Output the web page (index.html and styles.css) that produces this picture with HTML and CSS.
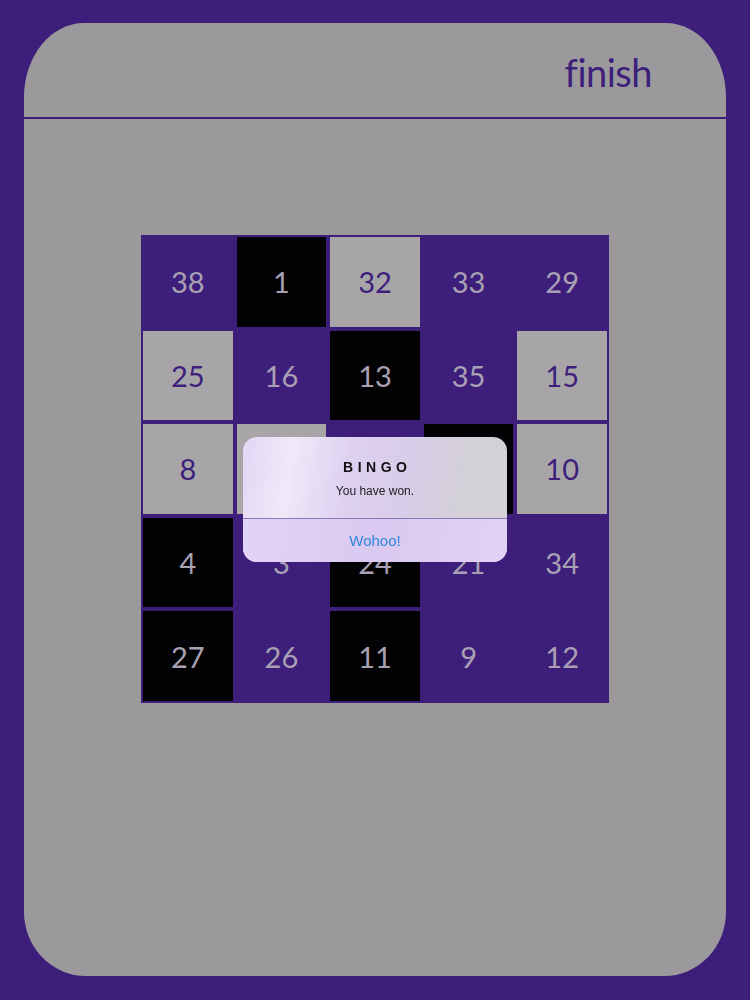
FILE: index.html
```html
<!DOCTYPE html>
<html>
<head>
<meta charset="utf-8">
<link rel="stylesheet" href="styles.css">
</head>
<body>
<div class="card">
  <header class="header"><span class="finish">finish</span></header>
  <main class="board-wrap">
    <div class="board">
      <div class="cell p">38</div><div class="cell b">1</div><div class="cell g">32</div><div class="cell p">33</div><div class="cell p">29</div>
      <div class="cell g">25</div><div class="cell p">16</div><div class="cell b">13</div><div class="cell p">35</div><div class="cell g">15</div>
      <div class="cell g">8</div><div class="cell g"></div><div class="cell p"></div><div class="cell b"></div><div class="cell g">10</div>
      <div class="cell b">4</div><div class="cell p">3</div><div class="cell b">24</div><div class="cell p">21</div><div class="cell p">34</div>
      <div class="cell b">27</div><div class="cell p">26</div><div class="cell b">11</div><div class="cell p">9</div><div class="cell p">12</div>
    </div>
  </main>
</div>
<div class="alert">
  <div class="alert-body">
    <div class="alert-title">BINGO</div>
    <div class="alert-msg">You have won.</div>
  </div>
  <div class="alert-btn">Wohoo!</div>
</div>
</body>
</html>
```
FILE: styles.css
```css
html, body {
  margin: 0;
  padding: 0;
}
body {
  background: #3d1f7b;
  width: 750px;
  height: 1000px;
  padding: 23px 24px 24px;
  box-sizing: border-box;
  font-family: "Lato", "Open Sans", sans-serif;
}
.card {
  background: #9b999c;
  height: 953px;
  border-radius: 60px 60px 62px 62px / 74px 74px 64px 64px;
  overflow: hidden;
  display: flex;
  flex-direction: column;
}
.header {
  height: 96px;
  border-bottom: 2px solid #3d1f7b;
  display: flex;
  justify-content: flex-end;
  align-items: flex-end;
  padding-right: 74px;
  padding-bottom: 26px;
  box-sizing: border-box;
  flex: none;
}
.finish {
  color: #3d1f7b;
  font-size: 38px;
  line-height: 1;
  letter-spacing: -0.5px;
}
.board-wrap {
  display: flex;
  justify-content: center;
  padding-top: 116px;
}
.board {
  width: 468px;
  height: 468px;
  box-sizing: border-box;
  background: #3d1f7b;
  padding: 2px;
  display: grid;
  grid-template-columns: repeat(5, 1fr);
  grid-template-rows: repeat(5, 1fr);
  gap: 4px;
}
.cell {
  display: flex;
  align-items: center;
  justify-content: center;
  font-size: 29px;
  color: #a9a1b3;
}
.cell.p { background: #3d1f7b; }
.cell.b { background: #020104; }
.cell.g { background: #a7a5a8; color: #3d1f7b; }

.alert {
  position: fixed;
  left: 243px;
  top: 437px;
  width: 264px;
  height: 125px;
  border-radius: 14px;
  overflow: hidden;
  background: linear-gradient(100deg, #e2d6f4 0%, #efe9f8 18%, #ddd0f0 40%, #d8cde8 60%, #d3d0d8 80%, #d4d1d8 100%);
  display: flex;
  flex-direction: column;
  font-family: "Liberation Sans", "Inter", sans-serif;
}
.alert-body {
  height: 82px;
  border-bottom: 1px solid #8c78b8;
  display: flex;
  flex-direction: column;
  align-items: center;
  padding-top: 22px;
  box-sizing: border-box;
}
.alert-title {
  font-size: 14px;
  font-weight: bold;
  letter-spacing: 4.5px;
  margin-right: -4.5px;
  color: #111;
  line-height: 16px;
}
.alert-msg {
  font-size: 12px;
  color: #222;
  margin-top: 9px;
  line-height: 14px;
}
.alert-btn {
  flex: 1;
  display: flex;
  align-items: center;
  justify-content: center;
  color: #2f86de;
  font-size: 15px;
  background: linear-gradient(100deg, #e2d4f6 0%, #d9c9f0 50%, #e0d3f4 100%);
}
```
